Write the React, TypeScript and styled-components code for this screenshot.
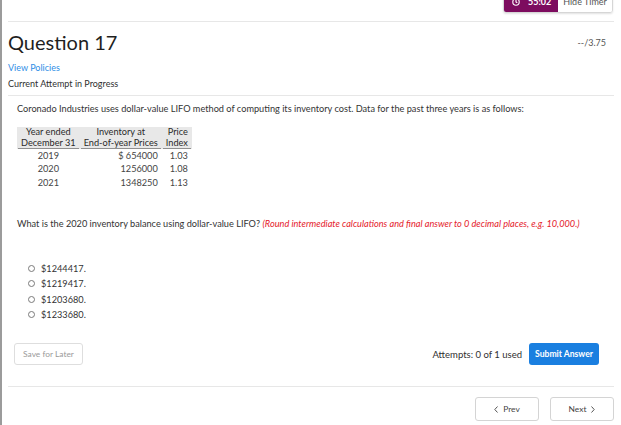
import React from 'react';
import styled, { createGlobalStyle } from 'styled-components';

const GlobalStyle = createGlobalStyle`
  html, body {
    margin: 0;
    padding: 0;
    background: #ffffff;
  }
  body {
    font-family: Lato, "Open Sans", Arial, sans-serif;
    color: #333;
  }
`;

const Page = styled.div`
  box-sizing: border-box;
  height: 425px;
  overflow: hidden;
  border-left: 2px solid #9b9b9b;
  padding: 0 7px 0 6px;
`;

const TimerBar = styled.div`
  display: flex;
  justify-content: flex-end;
  align-items: flex-start;
  height: 21px;
  padding-right: 1px;
`;

const Timer = styled.div`
  display: flex;
  margin-top: -10px;
  height: 21px;
  border: 1px solid #d6d6d6;
  border-radius: 3px;
  overflow: hidden;
  box-shadow: 0 1px 2px rgba(0, 0, 0, 0.12);
`;

const TimerClock = styled.div`
  display: flex;
  align-items: center;
  gap: 8px;
  width: 54px;
  padding-left: 8px;
  box-sizing: border-box;
  background: #7d0c5f;
  color: #fff;
  font-size: 9px;
  font-weight: 700;
`;

const HideTimer = styled.div`
  display: flex;
  align-items: center;
  justify-content: center;
  width: 54px;
  background: #fff;
  color: #555;
  font-size: 9px;
`;

const Divider = styled.hr<{ $mt?: number }>`
  margin: ${p => p.$mt ?? 0}px 0 0;
  border: 0;
  border-top: 1px solid #e7e7e7;
  height: 0;
`;

const Header = styled.div`
  display: flex;
  justify-content: space-between;
  align-items: baseline;
  margin-top: 8px;
`;

const Title = styled.h1`
  margin: 0;
  font-size: 20px;
  line-height: 24px;
  font-weight: 400;
  color: #1f1f1f;
`;

const Points = styled.span`
  font-size: 9px;
  color: #555;
  padding-right: 8px;
  align-self: center;
`;

const PolicyLink = styled.a`
  display: block;
  margin: 8px 0 0;
  font-size: 9px;
  line-height: 12px;
  color: #2f8ee6;
  text-decoration: none;
`;

const Status = styled.div`
  margin: 4px 0 0;
  font-size: 9px;
  line-height: 11px;
  color: #2f2f2f;
`;

const Body = styled.div`
  padding: 0 0 0 9px;
`;

const Paragraph = styled.p`
  margin: 7px 0 0;
  font-size: 9.2px;
  line-height: 11px;
  color: #333;
`;

const DataTable = styled.table`
  margin-top: 13px;
  border-collapse: collapse;
  font-size: 9.2px;
  line-height: 10.6px;
  color: #444;
`;

const HeadCell = styled.th<{ $align?: string }>`
  background: #e8e8e8;
  padding: 0 1px;
  font-weight: 400;
  line-height: 10.6px;
  color: #2a2a2a;
  text-align: ${p => p.$align || 'center'};
`;

const HeadInner = styled.div`
  padding: 0 3px;
  border-bottom: 1px solid #8f8f8f;
`;

const Cell = styled.td<{ $align?: string }>`
  height: 13.6px;
  padding: 0 4px;
  line-height: 10.6px;
  text-align: ${p => p.$align || 'center'};
  vertical-align: middle;
`;

const Question = styled.p`
  margin: 28px 0 0;
  font-size: 9.2px;
  line-height: 11px;
  color: #333;
`;

const Hint = styled.em`
  color: #e5202b;
`;

const Options = styled.div`
  display: flex;
  flex-direction: column;
  margin: 32px 0 0 11px;
`;

const Option = styled.label`
  display: flex;
  align-items: center;
  gap: 6px;
  height: 15.3px;
  font-size: 9.2px;
  color: #333;
`;

const Radio = styled.span`
  width: 5px;
  height: 5px;
  border: 1px solid #7a7a7a;
  border-radius: 50%;
`;

const ActionRow = styled.div`
  display: flex;
  align-items: center;
  margin-top: 21px;
  padding: 0 15px 0 6px;
`;

const SaveButton = styled.button`
  height: 22px;
  width: 69px;
  padding: 0;
  border: 1px solid #dedede;
  border-radius: 3px;
  background: #fff;
  color: #9a9a9a;
  font-family: inherit;
  font-size: 8.4px;
`;

const Attempts = styled.span`
  margin-left: auto;
  font-size: 9.5px;
  color: #2f2f2f;
`;

const SubmitButton = styled.button`
  margin-left: 7px;
  height: 22px;
  width: 70px;
  padding: 0;
  border: 0;
  border-radius: 3px;
  background: #1a7fe0;
  color: #fff;
  font-family: inherit;
  font-size: 8.6px;
  font-weight: 700;
`;

const NavRow = styled.div`
  display: flex;
  justify-content: flex-end;
  gap: 11px;
  margin-top: 10px;
`;

const NavButton = styled.button`
  display: flex;
  align-items: center;
  justify-content: center;
  gap: 5px;
  width: 64px;
  height: 24px;
  border: 1px solid #d4d4d4;
  border-radius: 3px;
  background: #fff;
  color: #444;
  font-family: inherit;
  font-size: 8.4px;
`;

const ClockIcon = () => (
  <svg width="8" height="8" viewBox="0 0 10 10" fill="none" stroke="#fff" strokeWidth="1.4">
    <circle cx="5" cy="5" r="4" />
    <path d="M5 2.6V5l1.6 1" />
  </svg>
);

const Chevron = ({ dir }: { dir: 'left' | 'right' }) => (
  <svg width="4" height="7" viewBox="0 0 4 7" fill="none" stroke="#555" strokeWidth="1">
    <path d={dir === 'left' ? 'M3.5 0.5L0.8 3.5l2.7 3' : 'M0.5 0.5l2.7 3-2.7 3'} />
  </svg>
);

const rows = [
  { year: '2019', amount: '$ 654000', index: '1.03' },
  { year: '2020', amount: '1256000', index: '1.08' },
  { year: '2021', amount: '1348250', index: '1.13' },
];

const choices = ['$1244417.', '$1219417.', '$1203680.', '$1233680.'];

export default function App() {
  return (
    <>
      <GlobalStyle />
      <Page>
        <TimerBar>
          <Timer>
            <TimerClock>
              <ClockIcon />
              <span>55:02</span>
            </TimerClock>
            <HideTimer>Hide Timer</HideTimer>
          </Timer>
        </TimerBar>
        <Divider />
        <Header>
          <Title>Question 17</Title>
          <Points>--/3.75</Points>
        </Header>
        <PolicyLink href="#">View Policies</PolicyLink>
        <Status>Current Attempt in Progress</Status>
        <Divider $mt={6} />
        <Body>
          <Paragraph>
            Coronado Industries uses dollar-value LIFO method of computing its inventory cost. Data for the past three years is as follows:
          </Paragraph>
          <DataTable>
            <thead>
              <tr>
                <HeadCell>
                  <HeadInner>Year ended<br />December 31</HeadInner>
                </HeadCell>
                <HeadCell>
                  <HeadInner>Inventory at<br />End-of-year Prices</HeadInner>
                </HeadCell>
                <HeadCell $align="right">
                  <HeadInner>Price<br />Index</HeadInner>
                </HeadCell>
              </tr>
            </thead>
            <tbody>
              {rows.map(r => (
                <tr key={r.year}>
                  <Cell>{r.year}</Cell>
                  <Cell $align="right">{r.amount}</Cell>
                  <Cell $align="right">{r.index}</Cell>
                </tr>
              ))}
            </tbody>
          </DataTable>
          <Question>
            What is the 2020 inventory balance using dollar-value LIFO?{' '}
            <Hint>(Round intermediate calculations and final answer to 0 decimal places, e.g. 10,000.)</Hint>
          </Question>
          <Options>
            {choices.map(c => (
              <Option key={c}>
                <Radio />
                {c}
              </Option>
            ))}
          </Options>
        </Body>
        <ActionRow>
          <SaveButton>Save for Later</SaveButton>
          <Attempts>Attempts: 0 of 1 used</Attempts>
          <SubmitButton>Submit Answer</SubmitButton>
        </ActionRow>
        <Divider $mt={21} />
        <NavRow>
          <NavButton>
            <Chevron dir="left" /> Prev
          </NavButton>
          <NavButton>
            Next <Chevron dir="right" />
          </NavButton>
        </NavRow>
      </Page>
    </>
  );
}
